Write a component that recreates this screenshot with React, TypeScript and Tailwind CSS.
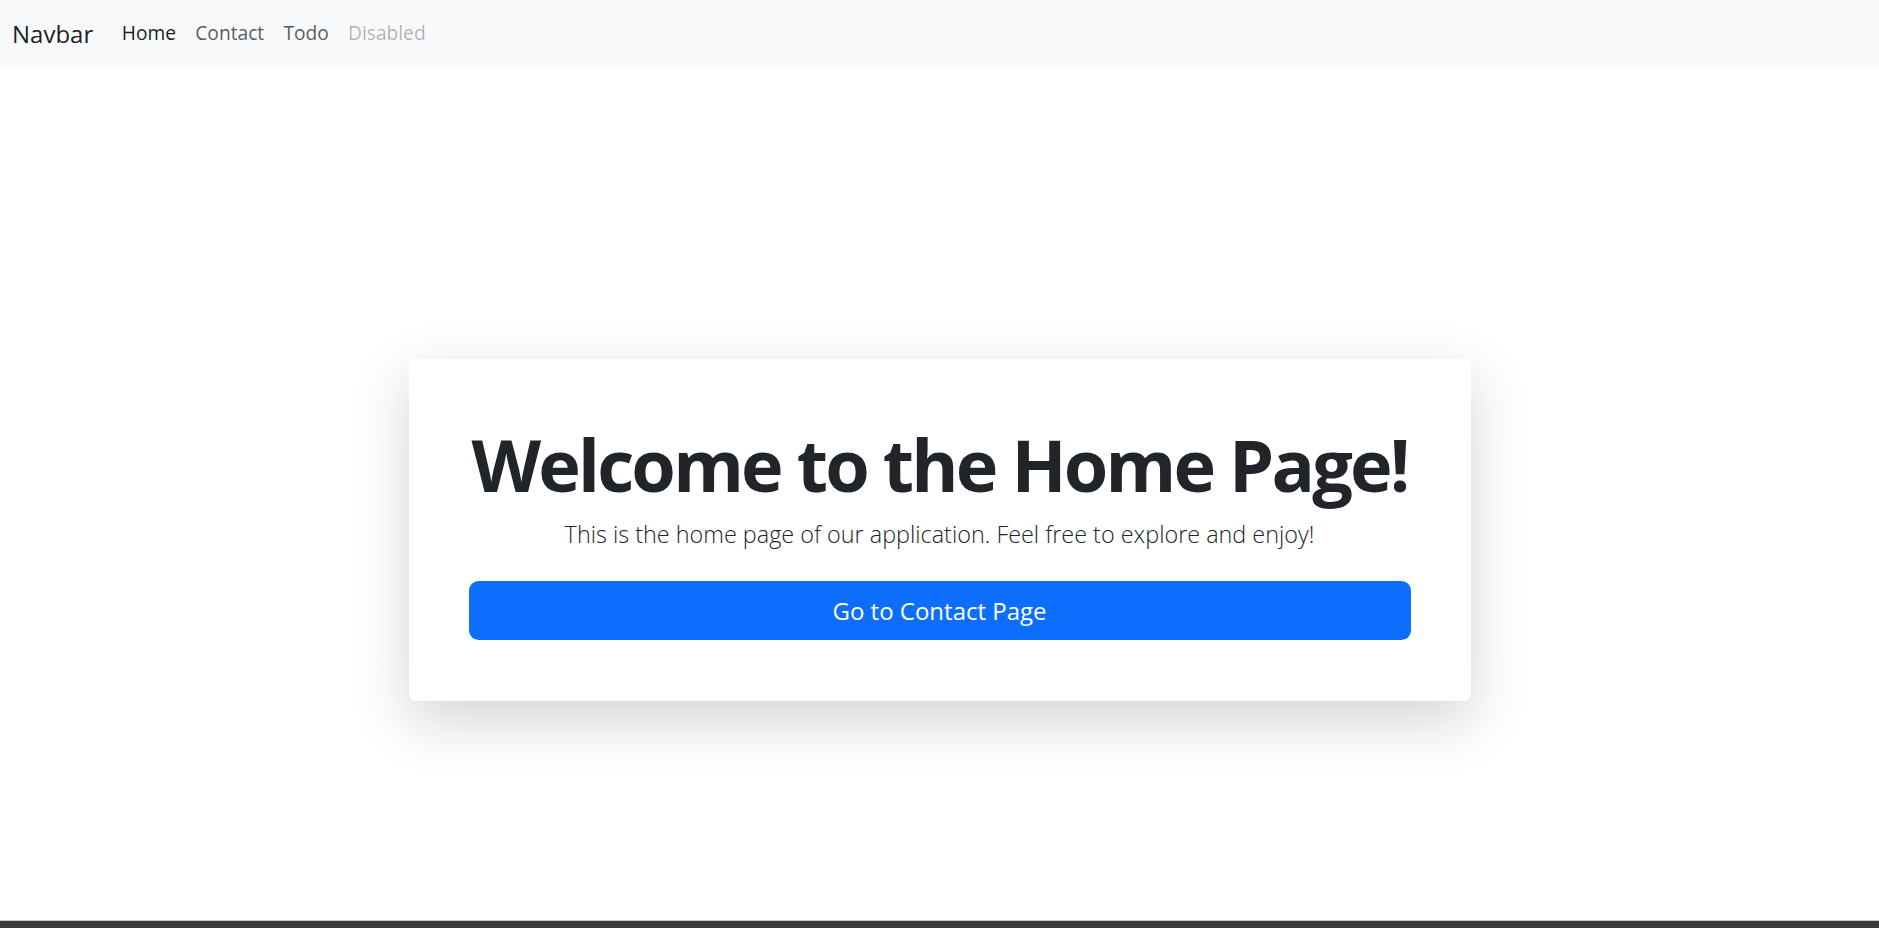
export default function App() {
  return (
    <div className="flex min-h-[928px] flex-col bg-white font-['Segoe_UI','Open_Sans',sans-serif] text-[#212529]">
      {/* navbar */}
      <nav className="flex h-[67px] items-center bg-[#f8f9fa] px-[12px]">
        <a className="mr-[19px] text-[24px] leading-[36px] text-black/90">Navbar</a>
        <ul className="flex items-center text-[19.2px]">
          <li className="px-[9.6px] text-black/90">Home</li>
          <li className="px-[9.6px] text-[rgba(33,37,41,0.75)]">Contact</li>
          <li className="px-[9.6px] text-[rgba(33,37,41,0.75)]">Todo</li>
          <li className="px-[9.6px] text-black/30">Disabled</li>
        </ul>
      </nav>

      {/* content */}
      <main className="flex flex-1 justify-center pt-[292px]">
        <div className="h-fit w-[1062px] rounded-[7px] bg-white px-[60px] pt-[59px] pb-[61px] text-center shadow-[0_19px_58px_rgba(0,0,0,0.175)]">
          <h1 className="whitespace-nowrap text-[72px] leading-[92px] font-bold tracking-[-2.8px]">
            Welcome to the Home Page!
          </h1>
          <p className="mt-[6px] text-[23.4px] leading-[36px] font-light">
            This is the home page of our application. Feel free to explore and enjoy!
          </p>
          <button className="mt-[29px] h-[59px] w-full rounded-[9.6px] bg-[#0d6efd] text-[24px] text-white">
            Go to Contact Page
          </button>
        </div>
      </main>

      <div className="h-[8px] border-t border-[#c8c8c8] bg-[#3b3b3b]" />
    </div>
  );
}
